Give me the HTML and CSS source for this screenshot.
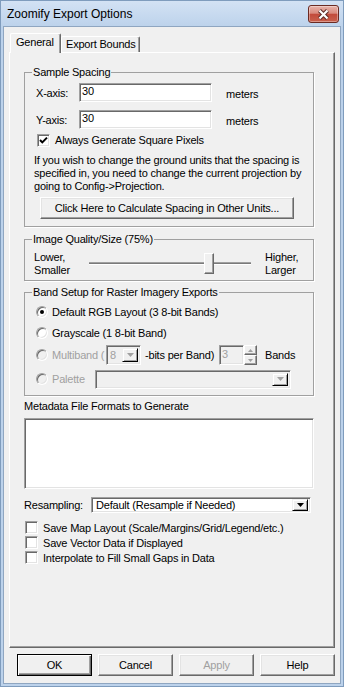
FILE: index.html
```html
<!DOCTYPE html>
<html lang="en">
<head>
<meta charset="UTF-8">
<meta name="viewport" content="width=device-width, initial-scale=1.0">
<title>Zoomify Export Options</title>
<link rel="stylesheet" href="styles.css">
</head>
<body>

<div class="window">

<div class="titlebar">
<span class="title">Zoomify Export Options</span>
<div class="close">
<svg width="13" height="11" viewBox="0 0 13 11"><path d="M2.5 1.5 L10.5 9.5 M10.5 1.5 L2.5 9.5" stroke="#5a2a26" stroke-width="4.2"/><path d="M2.5 1.5 L10.5 9.5 M10.5 1.5 L2.5 9.5" stroke="#fff" stroke-width="2.2"/></svg>
</div>
</div>

<div class="client">

<ul class="tabs">
<li class="active">General</li>
<li class="second">Export Bounds</li>
</ul>

<div class="panel">

<!-- Sample Spacing -->
<fieldset class="group spacing">
<legend>Sample Spacing</legend>
<div class="axis-row first">
<span class="axis-label">X-axis:</span>
<span class="edit axis-edit">30</span>
<span class="unit">meters</span>
</div>
<div class="axis-row">
<span class="axis-label">Y-axis:</span>
<span class="edit axis-edit">30</span>
<span class="unit">meters</span>
</div>
<div class="check-row square">
<span class="checkbox"><svg width="11" height="11" viewBox="0 0 11 11"><path d="M2 5 L4.3 7.4 L9 2.6" stroke="#000" stroke-width="2" fill="none"/></svg></span>
<span>Always Generate Square Pixels</span>
</div>
<p class="note">If you wish to change the ground units that the spacing is<br>specified in, you need to change the current projection by<br>going to Config-&gt;Projection.</p>
<div class="button wide">Click Here to Calculate Spacing in Other Units...</div>
</fieldset>

<!-- Image Quality -->
<fieldset class="group quality">
<legend>Image Quality/Size (75%)</legend>
<div class="slider-row">
<div class="slider-label">Lower,<br>Smaller</div>
<div class="slider">
<div class="track"></div>
<div class="thumb"></div>
</div>
<div class="slider-label right">Higher,<br>Larger</div>
</div>
</fieldset>

<!-- Band Setup -->
<fieldset class="group bands">
<legend>Band Setup for Raster Imagery Exports</legend>
<div class="radio-row first">
<span class="radio on"></span>
<span>Default RGB Layout (3 8-bit Bands)</span>
</div>
<div class="radio-row">
<span class="radio"></span>
<span>Grayscale (1 8-bit Band)</span>
</div>
<div class="radio-row multi">
<span class="radio off"></span>
<span class="dim multi-label">Multiband (</span>
<span class="combo bits"><span class="combo-text dim">8</span><span class="drop"><svg width="7" height="4" viewBox="0 0 7 4"><path d="M0 0 H7 L3.5 4 Z" fill="#a0a0a0"/></svg></span></span>
<span class="bits-label">-bits per Band)</span>
<span class="edit spin-edit dim">3</span>
<span class="spinner">
<span class="spin-btn"><svg width="5" height="3" viewBox="0 0 5 3"><path d="M0 3 H5 L2.5 0 Z" fill="#a0a0a0"/></svg></span>
<span class="spin-btn"><svg width="5" height="3" viewBox="0 0 5 3"><path d="M0 0 H5 L2.5 3 Z" fill="#a0a0a0"/></svg></span>
</span>
<span class="bands-label">Bands</span>
</div>
<div class="radio-row palette">
<span class="radio off"></span>
<span class="dim palette-label">Palette</span>
<span class="combo palette-combo"><span class="combo-text"></span><span class="drop"><svg width="7" height="4" viewBox="0 0 7 4"><path d="M0 0 H7 L3.5 4 Z" fill="#a0a0a0"/></svg></span></span>
</div>
</fieldset>

<div class="meta-label">Metadata File Formats to Generate</div>
<div class="listbox"></div>

<div class="resample-row">
<span class="resample-label">Resampling:</span>
<span class="combo resample"><span class="combo-text">Default (Resample if Needed)</span><span class="drop"><svg width="7" height="4" viewBox="0 0 7 4"><path d="M0 0 H7 L3.5 4 Z" fill="#000"/></svg></span></span>
</div>

<div class="options">
<div class="check-row"><span class="checkbox"></span><span>Save Map Layout (Scale/Margins/Grid/Legend/etc.)</span></div>
<div class="check-row"><span class="checkbox"></span><span>Save Vector Data if Displayed</span></div>
<div class="check-row"><span class="checkbox"></span><span>Interpolate to Fill Small Gaps in Data</span></div>
</div>

</div>

<div class="dialog-buttons">
<div class="button default">OK</div>
<div class="button">Cancel</div>
<div class="button disabled">Apply</div>
<div class="button">Help</div>
</div>

</div>
</div>

</body>
</html>
```

FILE: styles.css
```css
body{
margin:0;
font-family:"Liberation Sans", Arial, sans-serif;
font-size:11px;
letter-spacing:-0.2px;
color:#000;
background:#fff;
}

/* Ventana */
.window{
width:344px;
height:687px;
box-sizing:border-box;
border:1px solid #7f9cbd;
background:linear-gradient(#d3e2f4, #bcd2eb 26px, #bcd2eb);
display:flex;
flex-direction:column;
}

.titlebar{
height:25px;
display:flex;
align-items:flex-start;
padding-left:6px;
}

.title{
font-size:12px;
letter-spacing:0;
line-height:14px;
margin-top:6px;
}

.close{
margin-left:auto;
margin-right:4px;
margin-top:4px;
width:31px;
height:18px;
box-sizing:border-box;
border:1px solid #6b2a22;
border-radius:3px;
background:linear-gradient(#e8b3aa, #d98a7d 45%, #c24b3b 52%, #c9604c);
box-shadow:inset 0 0 0 1px rgba(255,255,255,0.35);
display:flex;
align-items:center;
justify-content:center;
}

.client{
flex:1;
margin:0 2px 2px 2px;
border:1px solid #8fa6c1;
background:#f0f0f0;
display:flex;
flex-direction:column;
}

/* Pestañas */
.tabs{
list-style:none;
margin:6px 0 0 6px;
padding:0;
display:flex;
align-items:flex-end;
height:19px;
}

.tabs li{
box-sizing:border-box;
height:16px;
line-height:15px;
padding-left:4px;
border:1px solid;
border-bottom:none;
border-color:#fff #696969 #fff #fff;
border-radius:2px 2px 0 0;
box-shadow:inset -1px 0 0 #a0a0a0;
background:#f0f0f0;
}

.tabs li.active{
width:51px;
height:20px;
line-height:17px;
padding-left:5px;
margin-bottom:-1px;
position:relative;
z-index:1;
}

.tabs li.second{
width:79px;
}

.panel{
height:596px;
box-sizing:border-box;
margin:0 5px;
border:1px solid;
border-color:#fff #696969 #696969 #fff;
box-shadow:inset -1px -1px 0 #a0a0a0;
padding:13px 0 0 14px;
}

/* Grupos */
.group{
width:290px;
box-sizing:border-box;
margin:0;
padding:0;
border:1px solid #a0a0a0;
box-shadow:1px 1px 0 #fff;
min-width:0;
}

.group legend{
margin-left:7px;
padding:0 1px;
line-height:13px;
}

.spacing{
padding-bottom:7px;
}

.quality{
margin-top:6px;
padding-bottom:3px;
}

.bands{
margin-top:5px;
padding-bottom:6px;
}

.axis-row{
display:flex;
align-items:center;
height:19px;
margin:8px 0 0 11px;
}

.axis-row.first{
margin-top:4px;
}

.axis-label{
width:43px;
}

.edit{
box-sizing:border-box;
background:#fff;
border:1px solid;
border-color:#a0a0a0 #fff #fff #a0a0a0;
box-shadow:inset 1px 1px 0 #696969, inset -1px -1px 0 #e3e3e3;
padding-left:2px;
line-height:15px;
}

.axis-edit{
width:133px;
height:19px;
}

.unit{
margin-left:14px;
padding-top:3px;
}

.check-row{
display:flex;
align-items:center;
gap:5px;
height:15px;
}

.check-row.square{
height:16px;
margin:3px 0 0 12px;
}

.checkbox{
width:13px;
height:13px;
box-sizing:border-box;
border:1px solid;
border-color:#a0a0a0 #fff #fff #a0a0a0;
box-shadow:inset 1px 1px 0 #696969, inset -1px -1px 0 #e3e3e3;
background:#fff;
display:flex;
align-items:center;
justify-content:center;
flex-shrink:0;
}

.note{
margin:6px 0 0 9px;
line-height:13px;
white-space:nowrap;
}

/* Botones */
.button{
box-sizing:border-box;
height:22px;
border:1px solid;
border-color:#fff #696969 #696969 #fff;
box-shadow:inset -1px -1px 0 #a0a0a0, inset 1px 1px 0 #e3e3e3;
background:#f0f0f0;
display:flex;
align-items:center;
justify-content:center;
}

.button.wide{
width:254px;
margin:4px 0 0 15px;
}

.button.default{
border:1px solid #000;
box-shadow:inset 1px 1px 0 #fff, inset -1px -1px 0 #696969, inset -2px -2px 0 #a0a0a0;
}

.button.disabled{
color:#a0a0a0;
}

/* Slider */
.slider-row{
display:flex;
align-items:center;
height:26px;
margin:5px 0 0 9px;
line-height:13px;
}

.slider-label{
width:55px;
flex-shrink:0;
}

.slider-label.right{
width:auto;
margin-left:14px;
}

.slider{
position:relative;
width:162px;
height:26px;
flex-shrink:0;
}

.track{
box-sizing:border-box;
height:3px;
margin-top:11px;
border-top:1px solid #a0a0a0;
border-bottom:1px solid #fff;
background:#7a7a7a;
}

.thumb{
position:absolute;
left:115px;
top:2px;
width:10px;
height:21px;
box-sizing:border-box;
border:1px solid;
border-color:#fff #696969 #696969 #fff;
box-shadow:inset -1px -1px 0 #a0a0a0;
background:#f0f0f0;
}

/* Radios */
.radio-row{
display:flex;
align-items:center;
height:20px;
margin:1px 0 0 11px;
}

.radio-row.first{
margin-top:3px;
}

.radio-row.multi{
margin-top:2px;
}

.radio-row.palette{
margin-top:4px;
}

.radio{
width:12px;
height:12px;
box-sizing:border-box;
border-radius:50%;
border:1px solid;
border-color:#a0a0a0 #fff #fff #a0a0a0;
box-shadow:inset 1px 1px 0 #696969, inset -1px -1px 0 #e3e3e3;
background:#fff;
margin-right:4px;
display:flex;
align-items:center;
justify-content:center;
flex-shrink:0;
}

.radio.on::after{
content:"";
width:4px;
height:4px;
border-radius:50%;
background:#000;
}

.radio.off{
background:#f0f0f0;
}

.dim{
color:#a0a0a0;
}

.multi-label{
width:54px;
}

.combo{
box-sizing:border-box;
border:1px solid;
border-color:#a0a0a0 #fff #fff #a0a0a0;
box-shadow:inset 1px 1px 0 #696969, inset -1px -1px 0 #e3e3e3;
background:#fff;
display:flex;
align-items:stretch;
padding:2px;
}

.combo-text{
flex:1;
padding-left:1px;
line-height:14px;
white-space:nowrap;
overflow:hidden;
}

.drop{
width:16px;
box-sizing:border-box;
border:1px solid;
border-color:#f0f0f0 #000 #000 #f0f0f0;
box-shadow:inset 1px 1px 0 #fff, inset -1px -1px 0 #a0a0a0;
background:#f0f0f0;
display:flex;
align-items:center;
justify-content:center;
}

.combo.bits{
width:35px;
height:20px;
background:#f0f0f0;
}

.bits-label{
width:74px;
margin-left:4px;
}

.spin-edit{
width:25px;
height:20px;
background:#f0f0f0;
line-height:17px;
}

.spinner{
width:13px;
height:20px;
display:flex;
flex-direction:column;
}

.spin-btn{
flex:1;
box-sizing:border-box;
border:1px solid;
border-color:#fff #696969 #696969 #fff;
box-shadow:inset -1px -1px 0 #a0a0a0;
background:#f0f0f0;
display:flex;
align-items:center;
justify-content:center;
}

.bands-label{
margin-left:8px;
}

.palette-label{
width:43px;
}

.combo.palette-combo{
width:196px;
height:19px;
background:#f0f0f0;
}

/* Metadatos */
.meta-label{
margin-top:4px;
line-height:13px;
}

.listbox{
width:290px;
height:71px;
box-sizing:border-box;
margin-top:5px;
border:1px solid;
border-color:#a0a0a0 #fff #fff #a0a0a0;
box-shadow:inset 1px 1px 0 #696969, inset -1px -1px 0 #e3e3e3;
background:#fff;
}

.resample-row{
display:flex;
align-items:center;
margin-top:8px;
height:16px;
}

.resample-label{
width:67px;
}

.combo.resample{
width:220px;
height:16px;
padding:1px 2px 1px 2px;
}

.combo.resample .combo-text{
line-height:13px;
padding-left:2px;
}

.options{
margin:7px 0 0 1px;
}

/* Botones del dialogo */
.dialog-buttons{
display:flex;
gap:6px;
margin:6px 0 0 13px;
}

.dialog-buttons .button{
width:75px;
}
```
